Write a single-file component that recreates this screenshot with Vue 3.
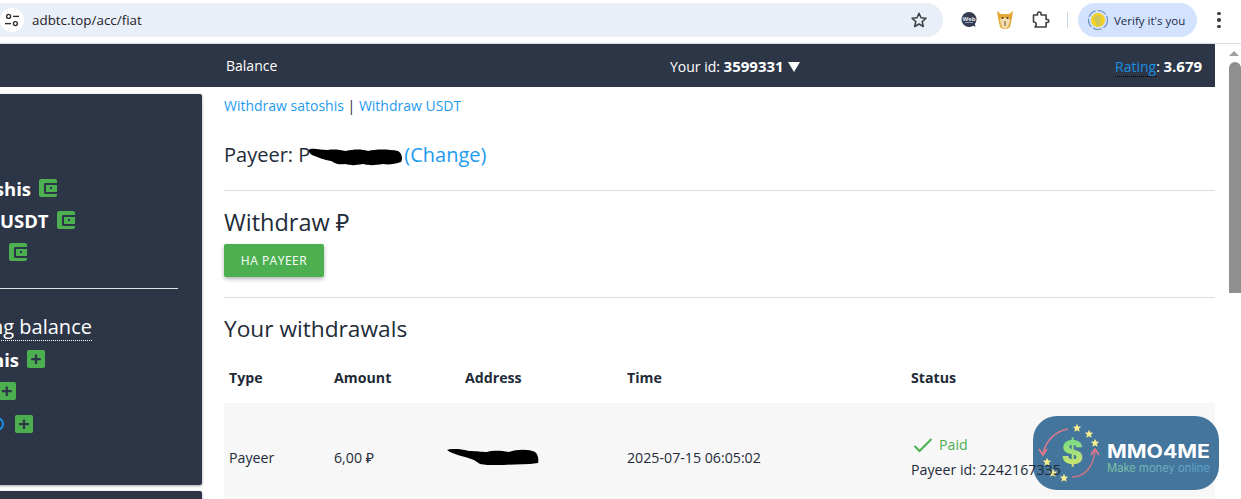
<template>
  <div class="screen">
    <div class="browser-bar">
      <div class="omnibox">
        <span class="site-info">
          <svg width="16" height="16" viewBox="0 0 16 16" fill="none" stroke="#2b2f33" stroke-width="1.4">
            <circle cx="4.6" cy="4.4" r="2" />
            <path d="M9 4.4h6" />
            <path d="M1 11.6h6" />
            <circle cx="11.4" cy="11.6" r="2" />
          </svg>
        </span>
        <span class="url">adbtc.top/acc/fiat</span>
        <svg class="star" width="18" height="18" viewBox="0 0 18 18" fill="none" stroke="#3c4043" stroke-width="1.5" stroke-linejoin="round">
          <path d="M9 2.2l2 4.6 5 .5-3.800 3.300 1.100 4.900L9 13l-4.300 2.500 1.100-4.900L2 7.300l5-.5z" />
        </svg>
      </div>
      <div class="extensions">
        <svg width="18" height="18" viewBox="0 0 18 18">
          <circle cx="9" cy="8.500" r="7.500" fill="#333c53" />
          <path d="M12 14l3.500 2-1-4z" fill="#333c53" />
          <text x="9" y="9.500" class="web-text">Web</text>
          <rect x="5" y="11" width="8" height="1" fill="#8fa0b5" />
        </svg>
        <svg width="18" height="20" viewBox="0 0 18 20">
          <path d="M1 1l4 3h8l4-3-1 7-2 9-3 2H7l-3-2-2-9z" fill="#e5a83a" />
          <path d="M5 8h8l1 3-2 6-3 2-3-2-2-6z" fill="#f3dcb0" />
          <circle cx="6.500" cy="8" r="1" fill="#4a3418" />
          <circle cx="11.500" cy="8" r="1" fill="#4a3418" />
          <path d="M9 11v5" stroke="#6d5228" stroke-width="1" />
        </svg>
        <svg width="18" height="18" viewBox="0 0 18 18" fill="none" stroke="#3c4043" stroke-width="1.600" stroke-linejoin="round">
          <path d="M1.500 4h4V2.800a1.800 1.800 0 0 1 3.600 0V4h5v4.500h1.200a1.500 1.500 0 0 1 0 3H14.100V16H3l1-1.500c1-2-.5-3.500-2.500-3.500z" />
        </svg>
        <span class="ext-sep"></span>
      </div>
      <div class="verify">
        <svg width="22" height="22" viewBox="0 0 22 22">
          <circle cx="11" cy="11" r="9.500" fill="none" stroke="#6f8fc0" stroke-width="1.200" stroke-dasharray="9 2" />
          <circle cx="11" cy="11" r="7" fill="#f2d21e" />
          <path d="M6 9l4-3 5 2-2 4 2 3-5 2-1-4z" fill="#cfc75e" />
        </svg>
        <span>Verify it's you</span>
      </div>
      <span class="kebab"><i></i><i></i><i></i></span>
    </div>

    <div class="viewport">
      <div class="page">
        <header class="topbar">
          <span></span>
          <span>Balance</span>
          <span>Your id: <b>3599331</b> <span class="caret"></span></span>
          <span class="rating"><a>Rating</a>: <b>3.679</b></span>
        </header>

        <div class="columns">
          <aside class="side">
            <div class="card balances">
              <div class="row strong row-satoshi">
                <span>Satoshis</span>
                <span class="tag"><i class="wallet"></i></span>
              </div>
              <div class="row strong row-usdt">
                <span>USDT</span>
                <span class="tag"><i class="wallet"></i></span>
              </div>
              <div class="row strong row-rub">
                <span>₽</span>
                <span class="tag"><i class="wallet"></i></span>
              </div>
              <hr class="side-line" />
              <div class="ad-title"><span>Advertising balance</span></div>
              <div class="row strong row-ad1">
                <span>Satoshis</span>
                <span class="tag plus">+</span>
              </div>
              <div class="row strong row-ad2">
                <span>USDT</span>
                <span class="tag plus">+</span>
              </div>
              <div class="row row-ad3">
                <span class="info-dot"></span>
                <span class="tag plus">+</span>
              </div>
            </div>
            <div class="card second"></div>
          </aside>

          <main class="content">
            <p class="links">
              <a>Withdraw satoshis</a> | <a>Withdraw USDT</a>
            </p>
            <p class="payeer">
              Payeer: P<span class="redact">
                <svg width="98" height="18" viewBox="0 0 98 18">
                  <path d="M4 1c6-1 10 1 18 1 6-1 12 0 18 1 8-2 16-2 22 0 8-2 20-2 30 0 4 2 5 8 3 11-6 2-12 3-18 2-8 1-12 2-20 0-8 1-10 2-18 0-8 1-10-1-14-3C18 12 12 9 6 7 3 5 2 2 4 1z" fill="#000" />
                </svg>
              </span><a>(Change)</a>
            </p>
            <hr class="rule" />
            <h2 class="withdraw-title">Withdraw ₽</h2>
            <button class="btn">НА PAYEER</button>
            <hr class="rule rule-two" />
            <h2 class="history-title">Your withdrawals</h2>
            <div class="table-head table-grid">
              <b>Type</b>
              <b>Amount</b>
              <b>Address</b>
              <b>Time</b>
              <b>Status</b>
            </div>
            <div class="table-row table-grid">
              <span>Payeer</span>
              <span>6,00 ₽</span>
              <span class="addr">
                <svg width="92" height="16" viewBox="0 0 92 16">
                  <path d="M0 1c6-2 14-1 22 1 8 0 12 1 18 1 8-2 14-1 22 0 8-3 20-3 26 0 3 2 4 8 3 11-12 2-24 1-34 2-10 1-18 0-24-1l-6-4C18 7 6 6 0 1z" fill="#000" />
                </svg>
              </span>
              <span>2025-07-15 06:05:02</span>
              <div class="status">
                <div class="paid">
                  <svg width="20" height="16" viewBox="0 0 20 16" fill="none" stroke="#4caf50" stroke-width="2">
                    <path d="M1.500 9l5 5L18.500 2" />
                  </svg>
                  <span>Paid</span>
                </div>
                <div class="payout-id">Payeer id: 2242167335</div>
              </div>
            </div>
          </main>
        </div>
      </div>

      <div class="scrollbar">
        <span class="arrow"></span>
        <span class="thumb"></span>
      </div>

      <svg class="badge" width="186" height="74" viewBox="0 0 186 74">
        <defs>
          <linearGradient id="dollar" x1="0" y1="0" x2="0" y2="1">
            <stop offset="0" stop-color="#5fd68a" />
            <stop offset="1" stop-color="#e6ea6a" />
          </linearGradient>
          <linearGradient id="tagline" x1="0" y1="0" x2="1" y2="0">
            <stop offset="0" stop-color="#7fc3a0" />
            <stop offset="1" stop-color="#5b9bd0" />
          </linearGradient>
        </defs>
        <rect width="186" height="74" rx="24" fill="#44759c" />
        <path d="M35 13C24 15 13 23 10 38" fill="none" stroke="#d9798c" stroke-width="1.600" />
        <path d="M6 33l4 6 4-6" fill="none" stroke="#e8788a" stroke-width="1.600" />
        <path d="M39 61c13 0 21-10 23-26" fill="none" stroke="#c9748a" stroke-width="1.600" />
        <path d="M58 39l4-6 4 6" fill="none" stroke="#e8788a" stroke-width="1.600" />
        <text x="28.500" y="48" class="dollar-sign" fill="url(#dollar)">$</text>
        <g fill="#f7ef8e">
          <path v-for="s in stars" :key="s.x" :transform="`translate(${s.x} ${s.y})`" d="M0-4.200l1.200 2.800 3 .2-2.300 2 .8 3L0 2.200-2.700 3.800l.8-3-2.300-2 3-.2z" />
        </g>
        <text x="74" y="42" class="brand" textLength="103" lengthAdjust="spacingAndGlyphs">MMO4ME</text>
        <text x="74" y="56" class="tag-line" fill="url(#tagline)" textLength="103" lengthAdjust="spacingAndGlyphs">Make money online</text>
      </svg>
    </div>
  </div>
</template>

<script setup>
const stars = [
  { x: 44, y: 12 },
  { x: 56, y: 18 },
  { x: 62, y: 27 },
  { x: 14, y: 46 },
  { x: 20, y: 57 },
  { x: 31, y: 62 }
]
</script>

<style>
html,
body {
  margin: 0;
  overflow: hidden;
  background: #fff;
}
</style>

<style scoped>
.screen {
  width: 1241px;
  height: 499px;
  overflow: hidden;
  font-family: "Open Sans", "Noto Sans", sans-serif;
  color: #222b38;
  background: #fff;
}

.browser-bar {
  display: flex;
  align-items: center;
  height: 44px;
  box-sizing: border-box;
  padding-bottom: 3px;
  border-bottom: 1px solid #d9dce0;
}

.omnibox {
  display: flex;
  align-items: center;
  width: 943px;
  height: 34px;
  flex-shrink: 0;
  background: #e9eff8;
  border-radius: 0 17px 17px 0;
}

.site-info {
  display: flex;
  align-items: center;
  justify-content: center;
  width: 24px;
  height: 24px;
  background: #fff;
  border-radius: 50%;
}

.url {
  margin-left: 8px;
  font-size: 13.400px;
  color: #1f2328;
}

.star {
  margin-left: auto;
  margin-right: 15px;
}

.extensions {
  display: flex;
  align-items: center;
  gap: 18px;
  margin-left: 17px;
}

.web-text {
  font-size: 6px;
  font-weight: 700;
  fill: #e6eaf0;
  text-anchor: middle;
}

.ext-sep {
  width: 1px;
  height: 16px;
  margin-left: -1px;
  background: #c6d5ea;
}

.verify {
  display: flex;
  align-items: center;
  gap: 5px;
  width: 119px;
  height: 34px;
  box-sizing: border-box;
  margin-left: 10px;
  padding-left: 9px;
  background: #d3e3fd;
  border-radius: 17px;
  font-size: 11.500px;
  color: #1c2b4a;
  white-space: nowrap;
}

.kebab {
  display: flex;
  flex-direction: column;
  gap: 3px;
  margin-left: 20px;
}

.kebab i {
  width: 3.500px;
  height: 3.500px;
  background: #3c4043;
  border-radius: 50%;
}

.viewport {
  position: relative;
  display: flex;
  height: 455px;
}

.page {
  width: 1215px;
  flex-shrink: 0;
}

.topbar {
  display: grid;
  grid-template-columns: 226px 444px 445px 1fr;
  align-items: center;
  height: 43px;
  background: #2d3646;
  color: #fff;
  font-size: 14px;
  white-space: nowrap;
}

.topbar b {
  font-size: 15px;
}

.caret {
  display: inline-block;
  width: 0;
  height: 0;
  margin-left: 1px;
  border-left: 6px solid transparent;
  border-right: 6px solid transparent;
  border-top: 10px solid #fff;
}

.rating a {
  color: #1a8fe3;
  border-bottom: 1px dotted #000;
}

.columns {
  display: flex;
}

/* the sidebar runs off the left edge of the window */
.side {
  display: flex;
  flex-direction: column;
  gap: 6px;
  width: 302px;
  margin-top: 7px;
  margin-left: -100px;
  flex-shrink: 0;
}

.card {
  background: #2d3646;
  border-radius: 2px;
  box-shadow: 0 1px 3px rgba(0, 0, 0, 0.35);
}

.balances {
  display: flex;
  flex-direction: column;
  height: 391px;
  box-sizing: border-box;
  padding-top: 78px;
  padding-left: 100px;
  color: #fff;
}

.second {
  height: 40px;
}

.row {
  display: flex;
  align-items: center;
  gap: 8px;
  height: 32px;
  white-space: nowrap;
}

.strong {
  font-size: 18.500px;
  font-weight: 700;
}

.row-satoshi {
  margin-left: -46px;
}

.row-usdt {
  margin-left: 0;
}

.row-rub {
  margin-left: -13px;
  gap: 11px;
}

.row-ad1 {
  margin-left: -58px;
}

.row-ad2 {
  margin-left: -59px;
}

.row-ad3 {
  margin-left: -10px;
  margin-top: 1px;
  gap: 11px;
}

.tag {
  display: inline-flex;
  align-items: center;
  justify-content: center;
  width: 18px;
  height: 18px;
  background: #4caf50;
  border-radius: 2px;
}

.wallet {
  position: relative;
  width: 13px;
  height: 11px;
  margin-left: 5px;
  box-sizing: border-box;
  border: 2px solid #2d3646;
  border-right: none;
  border-radius: 2px 0 0 2px;
}

.wallet::after {
  content: "";
  position: absolute;
  top: 2.500px;
  left: 4px;
  width: 2px;
  height: 2px;
  background: #2d3646;
}

.plus {
  color: #2d3646;
  font-size: 20px;
  font-weight: 700;
  line-height: 1;
}

.side-line {
  width: 278px;
  margin: 20px 0 0 -100px;
  border: none;
  border-top: 1px solid #dfe2e6;
}

.ad-title {
  height: 28px;
  margin-left: -90px;
  margin-top: 26px;
  font-size: 20px;
  line-height: 24px;
  white-space: nowrap;
}

.ad-title span {
  border-bottom: 1px dotted #fff;
}

.info-dot {
  width: 14px;
  height: 14px;
  box-sizing: border-box;
  border: 2px solid #1a8fe3;
  border-radius: 50%;
}

.content {
  flex: 1;
  min-width: 0;
  margin-left: 22px;
}

.content a {
  color: #1d9bf0;
}

.links {
  margin: 9px 0 0;
  font-size: 14px;
  line-height: 20px;
}

.payeer {
  margin: 25px 0 0;
  height: 28px;
  line-height: 28px;
  font-size: 20px;
  white-space: nowrap;
}

.redact {
  display: inline-block;
  margin-left: -4px;
  vertical-align: -4px;
  line-height: 0;
}

.rule {
  margin: 21px 0 0;
  border: none;
  border-top: 1px solid #dddddd;
}

.withdraw-title {
  margin: 16px 0 0;
  font-size: 23.500px;
  font-weight: 400;
  line-height: 30px;
}

.btn {
  display: block;
  width: 100px;
  height: 33px;
  margin-top: 7px;
  padding: 0;
  border: none;
  border-radius: 2px;
  background: #4caf50;
  color: #fff;
  font-family: inherit;
  font-size: 12px;
  letter-spacing: 0.5px;
  box-shadow: 0 2px 4px rgba(0, 0, 0, 0.3);
}

.rule-two {
  margin-top: 20px;
}

.history-title {
  margin: 16px 0 0;
  font-size: 22.700px;
  font-weight: 400;
  line-height: 30px;
}

.table-grid {
  display: grid;
  grid-template-columns: 105px 131px 162px 284px 1fr;
  padding-left: 5px;
  font-size: 14.200px;
}

.table-head {
  align-items: center;
  height: 51px;
  margin-top: 8px;
}

.table-row {
  align-items: center;
  height: 108px;
  box-sizing: border-box;
  background: #f7f7f7;
}

.addr {
  display: flex;
  margin-left: -18px;
}

.status {
  display: flex;
  flex-direction: column;
  gap: 6px;
  white-space: nowrap;
}

.paid {
  display: flex;
  align-items: center;
  gap: 6px;
  margin-left: 2px;
  color: #4caf50;
}

.payout-id {
  position: relative;
  z-index: 2;
}

.scrollbar {
  position: relative;
  flex: 1;
}

.arrow {
  position: absolute;
  top: 7px;
  left: 14px;
  width: 0;
  height: 0;
  border-left: 5px solid transparent;
  border-right: 5px solid transparent;
  border-bottom: 5px solid #a0a0a0;
}

.thumb {
  position: absolute;
  top: 18px;
  left: 14px;
  width: 12px;
  height: 231px;
  background: #8f8f8f;
  border-radius: 6px 6px 0 0;
}

.badge {
  position: absolute;
  left: 1033px;
  top: 372px;
  z-index: 1;
}

.dollar-sign {
  font-family: "Inter", sans-serif;
  font-size: 33px;
  font-weight: 800;
}

.brand {
  font-family: "Inter", sans-serif;
  font-size: 19px;
  font-weight: 700;
  fill: #fff;
}

.tag-line {
  font-family: "Inter", sans-serif;
  font-size: 11.500px;
}
</style>
